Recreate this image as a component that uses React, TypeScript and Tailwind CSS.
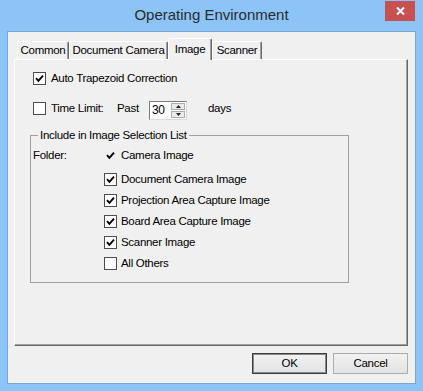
import type { ReactNode } from 'react'

// ── Small Win32-ish controls ──────────────────────────────────────────────────

function Tick() {
  return (
    <svg width="9" height="9" viewBox="0 0 9 9" className="block">
      <path d="M1 4.2 L3.4 6.8 L8 1.6" stroke="#000" strokeWidth="1.9" fill="none" />
    </svg>
  )
}

function CheckBox({ checked }: { checked: boolean }) {
  return (
    <span className="w-[13px] h-[13px] border border-[#4d4d4d] bg-white flex items-center justify-center shrink-0">
      {checked && <Tick />}
    </span>
  )
}

function Tab({ label, active, width }: { label: string; active?: boolean; width: string }) {
  if (active) {
    return (
      <div
        className={`${width} h-[22px] -mb-px relative z-10 flex items-center justify-center whitespace-nowrap bg-[#f0f0f0] border-t border-l border-white border-r border-r-[#696969] rounded-t-[2px] shadow-[inset_-1px_0_0_#a0a0a0]`}
      >
        {label}
      </div>
    )
  }
  return (
    <div
      className={`${width} h-[18px] flex items-center justify-center whitespace-nowrap bg-[#f0f0f0] border-t border-l border-white border-r border-r-[#696969] rounded-t-[2px] shadow-[inset_-1px_0_0_#a0a0a0]`}
    >
      {label}
    </div>
  )
}

function FolderRow({ children, label }: { children: ReactNode; label: string }) {
  return (
    <div className="h-[21px] flex items-center gap-[4px]">
      {children}
      <span>{label}</span>
    </div>
  )
}

function Button({ label, isDefault }: { label: string; isDefault?: boolean }) {
  return (
    <button
      className={
        isDefault
          ? 'w-[75px] h-[21px] flex items-center justify-center border border-[#3c3c3c] shadow-[inset_0_0_0_1px_#8a8a8a] bg-gradient-to-b from-[#f2f2f2] to-[#e3e3e3] text-black'
          : 'w-[75px] h-[21px] flex items-center justify-center border border-[#acacac] bg-gradient-to-b from-[#f2f2f2] to-[#e3e3e3] text-black'
      }
    >
      {label}
    </button>
  )
}

export default function App() {
  return (
    <div className="w-[423px] h-[391px] bg-[#8cc4f7] flex flex-col font-['Liberation_Sans',Arial,sans-serif] text-[11.5px] tracking-[-0.3px] text-black">
      {/* Title bar */}
      <div className="h-[31px] grid grid-cols-[1fr_auto_1fr]">
        <div />
        <div className="mt-[5px] leading-[20px] text-[15px] tracking-normal text-[#2b2b2b]">Operating Environment</div>
        <div className="flex justify-end items-start">
          <div className="mt-[1px] mr-[8px] w-[30px] h-[20px] bg-[#c75050] flex items-center justify-center">
            <svg width="9" height="8" viewBox="0 0 9 8">
              <path d="M1 0.5 L8 7.5 M8 0.5 L1 7.5" stroke="#fff" strokeWidth="2" />
            </svg>
          </div>
        </div>
      </div>

      {/* Client area */}
      <div className="mx-[7px] mb-[7px] flex-1 border border-[#7ea6cc] bg-[#f0f0f0] flex flex-col">
        {/* Tabs */}
        <div className="mt-[6px] h-[21px] pl-[9px] flex items-end">
          <Tab label="Common" width="w-[52px]" />
          <Tab label="Document Camera" width="w-[99px]" />
          <Tab label="Image" width="w-[44px]" active />
          <Tab label="Scanner" width="w-[50px]" />
        </div>

        {/* Tab page */}
        <div className="ml-[6px] mr-[7px] h-[287px] border-t border-l border-white border-r border-b border-r-[#696969] border-b-[#696969] shadow-[inset_-1px_-1px_0_#a0a0a0] flex flex-col">
          <div className="mt-[12px] ml-[18px] h-[13px] flex items-center gap-[5px]">
            <CheckBox checked />
            <span>Auto Trapezoid Correction</span>
          </div>

          <div className="mt-[14px] ml-[18px] h-[21px] flex items-start">
            <div className="mt-[3px]">
              <CheckBox checked={false} />
            </div>
            <span className="ml-[5px] w-[66px] leading-[19px]">Time Limit:</span>
            <span className="w-[32px] leading-[19px]">Past</span>
            <div className="mt-[2px] w-[38px] h-[19px] border border-t-[#7a7a7a] border-l-[#7a7a7a] border-r-[#dcdcdc] border-b-[#dcdcdc] bg-white flex items-center">
              <span className="pl-[2px] flex-1 leading-[17px] text-[12px]">30</span>
              <div className="w-[16px] h-full flex flex-col p-[1px] gap-[1px]">
                <div className="flex-1 bg-[#eaeaea] border border-[#adadad] flex items-center justify-center">
                  <svg width="5" height="3" viewBox="0 0 5 3">
                    <path d="M0 3 L2.5 0 L5 3 Z" fill="#222" />
                  </svg>
                </div>
                <div className="flex-1 bg-[#eaeaea] border border-[#adadad] flex items-center justify-center">
                  <svg width="5" height="3" viewBox="0 0 5 3">
                    <path d="M0 0 L2.5 3 L5 0 Z" fill="#222" />
                  </svg>
                </div>
              </div>
            </div>
            <span className="ml-[21px] leading-[19px]">days</span>
          </div>

          {/* Group box */}
          <fieldset className="mt-[7px] ml-[15px] w-[319px] h-[156px] border border-[#a0a0a0] pl-[2px]">
            <legend className="ml-[5px] px-[2px] leading-[16px]">Include in Image Selection List</legend>
            <div className="mt-[2px] grid grid-cols-[71px_1fr]">
              <div className="h-[21px] flex items-center">Folder:</div>
              <div className="flex flex-col">
                <div className="h-[21px] flex items-center">
                  <span className="w-[13px] flex justify-center shrink-0">
                    <Tick />
                  </span>
                  <span className="ml-[4px]">Camera Image</span>
                </div>
                <div className="mt-[3px]">
                  <FolderRow label="Document Camera Image">
                    <CheckBox checked />
                  </FolderRow>
                  <FolderRow label="Projection Area Capture Image">
                    <CheckBox checked />
                  </FolderRow>
                  <FolderRow label="Board Area Capture Image">
                    <CheckBox checked />
                  </FolderRow>
                  <FolderRow label="Scanner Image">
                    <CheckBox checked />
                  </FolderRow>
                  <FolderRow label="All Others">
                    <CheckBox checked={false} />
                  </FolderRow>
                </div>
              </div>
            </div>
          </fieldset>
        </div>

        {/* Buttons */}
        <div className="mt-[7px] mr-[7px] flex justify-end gap-[6px]">
          <Button label="OK" isDefault />
          <Button label="Cancel" />
        </div>
      </div>
    </div>
  )
}
